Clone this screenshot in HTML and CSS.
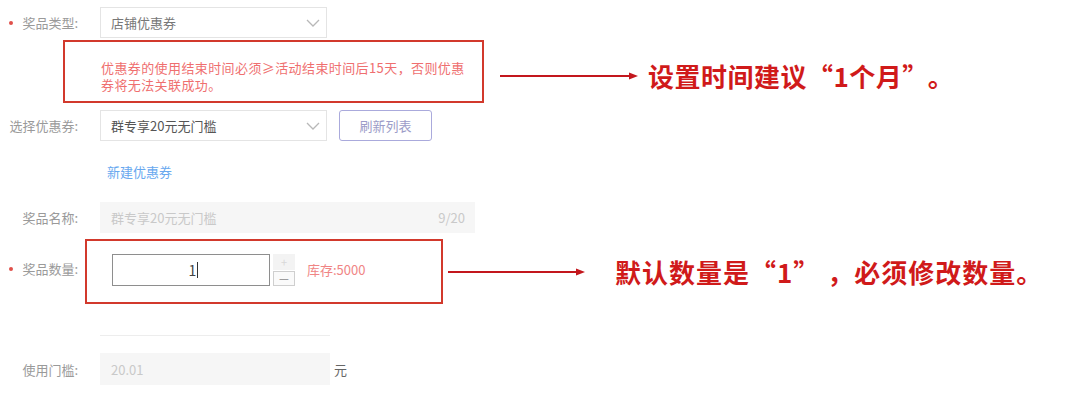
FILE: index.html
```html
<!DOCTYPE html>
<html lang="zh-CN">
<head>
<meta charset="utf-8">
<title>奖品设置</title>
<link rel="stylesheet" href="styles.css">
</head>
<body>
<div class="page">
  <div class="row">
    <div class="label"><span class="req"></span>奖品类型:</div>
    <div class="select">
      <span>店铺优惠券</span>
      <svg class="chev" width="14" height="8" viewBox="0 0 14 8"><polyline points="1,1 7,7 13,1" fill="none" stroke="#b8b8b8" stroke-width="1.3"/></svg>
    </div>
  </div>

  <div class="note-row">
    <div class="mark mark-hint">
      <p class="hint">优惠券的使用结束时间必须≥活动结束时间后15天，否则优惠券将无法关联成功。</p>
    </div>
    <div class="callout callout-1">
      <svg class="arrow" width="138" height="10" viewBox="0 0 138 10"><line x1="0" y1="5" x2="131" y2="5" stroke="#c3171d" stroke-width="2"/><polygon points="129,1.5 138,5 129,8.5" fill="#c3171d"/></svg>
      <span class="callout-text t1">设置时间建议“1个月”<span class="stop">。</span></span>
    </div>
  </div>

  <div class="row row-coupon">
    <div class="label">选择优惠券:</div>
    <div class="select">
      <span class="dark">群专享20元无门槛</span>
      <svg class="chev" width="14" height="8" viewBox="0 0 14 8"><polyline points="1,1 7,7 13,1" fill="none" stroke="#b8b8b8" stroke-width="1.3"/></svg>
    </div>
    <div class="btn">刷新列表</div>
  </div>

  <div class="link-row">新建优惠券</div>

  <div class="row row-name">
    <div class="label">奖品名称:</div>
    <div class="input-fill wide">
      <span>群专享20元无门槛</span>
      <span>9/20</span>
    </div>
  </div>

  <div class="note-row qty-row">
    <div class="label qty-label"><span class="req"></span>奖品数量:</div>
    <div class="mark mark-qty">
      <div class="num"><span class="val">1</span><span class="caret"></span></div>
      <div class="stepper">
        <span class="step up">+</span>
        <span class="step down">—</span>
      </div>
      <div class="stock">库存:5000</div>
    </div>
    <div class="callout callout-2">
      <svg class="arrow" width="137" height="10" viewBox="0 0 137 10"><line x1="0" y1="5" x2="130" y2="5" stroke="#c3171d" stroke-width="2"/><polygon points="128,1.5 137,5 128,8.5" fill="#c3171d"/></svg>
      <span class="callout-text t2">默认数量是“1” ，必须修改数量。</span>
    </div>
  </div>

  <div class="divider"></div>

  <div class="row row-min">
    <div class="label">使用门槛:</div>
    <div class="input-fill narrow"><span>20.01</span></div>
    <span class="unit">元</span>
  </div>
</div>
</body>
</html>
```

FILE: styles.css
```css
* { box-sizing: border-box; }

body {
  margin: 0;
  background: #fff;
  font-family: "Noto Sans CJK SC", "Noto Sans", sans-serif;
  font-size: 13px;
  color: #666;
}

.page {
  width: 1080px;
  height: 402px;
  overflow: hidden;
  padding-top: 7px;
}

.row {
  display: flex;
  align-items: center;
  height: 31px;
}

.label {
  width: 100px;
  flex: none;
  padding-right: 22px;
  display: flex;
  align-items: center;
  justify-content: flex-end;
  color: #9a9a9a;
  line-height: 1;
  white-space: nowrap;
}

.req {
  width: 4px;
  height: 4px;
  border-radius: 50%;
  background: #e0504a;
  margin-left: 9px;
  margin-right: auto;
}

.select {
  width: 227px;
  height: 31px;
  border: 1px solid #e4e4e4;
  display: flex;
  align-items: center;
  justify-content: space-between;
  padding: 0 6px 0 10px;
  color: #777;
}

.select .dark { color: #555; }

.note-row {
  display: flex;
  margin-top: 2px;
}

.mark {
  border: 2px solid #d2392c;
  flex: none;
}

.mark-hint {
  margin-left: 63px;
  width: 421px;
  height: 63px;
  padding: 17px 0 0 36px;
}

.hint {
  margin: 0;
  width: 368px;
  color: #ef6f6f;
  line-height: 17px;
  letter-spacing: 0.4px;
}

.callout {
  display: flex;
  align-items: center;
}

.callout-1 {
  margin-left: 16px;
  margin-top: 23px;
  height: 26px;
}

.callout-text {
  font-size: 26px;
  font-weight: 700;
  line-height: 26px;
  color: #d01a1a;
  white-space: nowrap;
}

.t1 { margin-left: 10px; letter-spacing: 0.5px; }
.t1 .stop { margin-left: 12px; }
.t2 { margin-left: 30px; letter-spacing: 1px; }

.row-coupon { margin-top: 7px; }

.btn {
  margin-left: 12px;
  width: 93px;
  height: 31px;
  border: 1px solid #aaaadc;
  border-radius: 3px;
  color: #9c9cc8;
  display: flex;
  align-items: center;
  justify-content: center;
}

.link-row {
  margin-top: 21px;
  height: 20px;
  line-height: 20px;
  padding-left: 107px;
  color: #68a8ef;
}

.row-name { margin-top: 20px; }

.input-fill {
  height: 31px;
  background: #f6f6f6;
  display: flex;
  align-items: center;
  justify-content: space-between;
  padding: 0 10px 0 11px;
  color: #c9c9c9;
}

.wide { width: 375px; }
.narrow { width: 230px; height: 32px; }

.qty-row {
  margin-top: 6px;
  align-items: center;
}

.qty-label { padding-bottom: 6px; }

.mark-qty {
  margin-left: -15px;
  width: 358px;
  height: 65px;
  padding: 13px 0 0 25px;
  display: flex;
  align-items: flex-start;
}

.num {
  width: 158px;
  height: 32px;
  border: 1px solid #8e8e8e;
  display: flex;
  align-items: center;
  justify-content: center;
  padding-left: 5px;
  color: #444;
  font-size: 14px;
}

.caret {
  width: 1px;
  height: 16px;
  background: #333;
  margin-left: 1px;
}

.stepper {
  margin-left: 3px;
  width: 22px;
  display: flex;
  flex-direction: column;
  gap: 1px;
}

.step {
  display: flex;
  align-items: center;
  justify-content: center;
  font-size: 11px;
  line-height: 1;
}

.up {
  height: 16px;
  background: #f3f3f3;
  color: #d8d8d8;
}

.down {
  height: 15px;
  border: 1px solid #cfcfcf;
  background: #fafafa;
  color: #888;
}

.stock {
  margin-left: 12px;
  line-height: 32px;
  color: #f08585;
}

.callout-2 { margin-left: 5px; }

.divider {
  margin: 31px 0 0 100px;
  width: 230px;
  height: 1px;
  background: #ededed;
}

.row-min {
  margin-top: 17px;
  height: 32px;
}

.unit {
  margin-left: 4px;
  color: #666;
}
```
